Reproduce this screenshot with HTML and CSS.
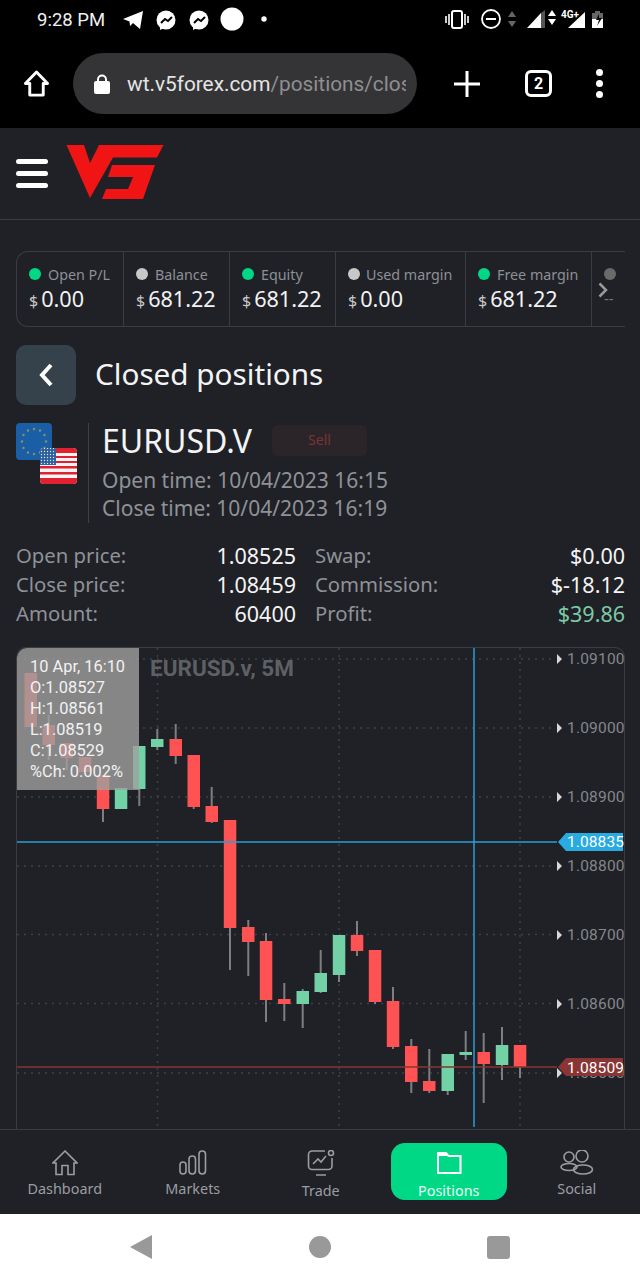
FILE: index.html
```html
<!doctype html>
<html lang="en">
<head>
    <meta charset="UTF-8">
    <title>Closed positions</title>
    <link rel="stylesheet" href="styles.css">
</head>
<body>

<div class="status-bar">
    <span class="status-time">9:28 PM</span>
    <svg class="status-left" viewBox="115 5 160 32">
        <path d="M123 20L143 12L140 30L133 24L130 27L129.500 22.500Z" fill="#fff"/>
        <circle cx="166" cy="21" r="9.500" fill="#fff"/><path d="M160 31l0-5 4 3z" fill="#fff"/>
        <path d="M161 24l4-4 3 2 4-4" class="zigzag"/>
        <circle cx="199" cy="21" r="9.500" fill="#fff"/><path d="M193 31l0-5 4 3z" fill="#fff"/>
        <path d="M194 24l4-4 3 2 4-4" class="zigzag"/>
        <circle cx="232" cy="20" r="11.500" fill="#fff"/>
        <circle cx="264" cy="20" r="2.700" fill="#fff"/>
    </svg>
    <svg class="status-right" viewBox="440 5 170 32">
        <rect x="452" y="12" width="10" height="17" rx="2" fill="none" stroke="#fff" stroke-width="2"/>
        <path d="M449 15v11M446 17v7M465 15v11M468 17v7" stroke="#fff" stroke-width="1.600"/>
        <circle cx="491" cy="20" r="9" fill="none" stroke="#fff" stroke-width="1.800"/>
        <path d="M486 20h10" stroke="#fff" stroke-width="2"/>
        <path d="M512 12l4 6h-8zM512 28l4-6h-8z" fill="#666"/>
        <path d="M527 29L541 14V29Z" fill="#fff"/><path d="M541 14l4-3V29h-4z" fill="#555"/>
        <path d="M552 11l4 6h-8zM552 26l4-6h-8z" fill="#fff"/>
        <text x="561" y="19" class="status-net">4G+</text>
        <path d="M568 29L585 13V29Z" fill="#fff"/>
        <path d="M595 12h5v2h3v6h-11v-6h3z" fill="#666"/>
        <path d="M592 20h11v9h-11z" fill="#fff"/>
        <path d="M599 15l-3 6h3l-2 6 5-8h-3z" fill="#000"/>
    </svg>
</div>

<div class="browser-bar">
    <svg class="browser-home" viewBox="0 0 28 28"><path d="M14 2L2.500 14H7V26H21V14H25.500Z" fill="none" stroke="#fff" stroke-width="3" stroke-linejoin="round"/></svg>
    <div class="url-pill">
        <svg class="url-lock" viewBox="0 0 16 20"><path d="M4 8V5.500a4 4 0 0 1 8 0V8" fill="none" stroke="#fff" stroke-width="2"/><rect y="7" width="16" height="13" rx="2" fill="#fff"/></svg>
        <div class="url-text">wt.v5forex.com<span class="url-path">/positions/closed</span></div>
    </div>
    <svg class="browser-plus" viewBox="0 0 26 26"><path d="M13 0V26M0 13H26" stroke="#fff" stroke-width="3"/></svg>
    <div class="tab-count">2</div>
    <div class="browser-menu"><i></i><i></i><i></i></div>
</div>

<div class="app-header">
    <div class="burger"><i></i><i></i><i></i></div>
    <svg class="logo" viewBox="66 145 98 54">
        <path d="M66.500 145H84L90 163L99 145H163.500L157 157.500H113L90 198Z" fill="#f01414"/>
        <path d="M112 165H155L143 199H102L106 189H128L133 177H108Z" fill="#f01414"/>
    </svg>
</div>

<div class="stats">
    <div class="stat">
        <div class="stat-label"><i class="dot dot-green"></i>Open P/L</div>
        <div class="stat-value"><small>$</small>0.00</div>
    </div>
    <div class="stat">
        <div class="stat-label"><i class="dot dot-grey"></i>Balance</div>
        <div class="stat-value"><small>$</small>681.22</div>
    </div>
    <div class="stat">
        <div class="stat-label"><i class="dot dot-green"></i>Equity</div>
        <div class="stat-value"><small>$</small>681.22</div>
    </div>
    <div class="stat">
        <div class="stat-label"><i class="dot dot-grey dot-tight"></i>Used margin</div>
        <div class="stat-value"><small>$</small>0.00</div>
    </div>
    <div class="stat">
        <div class="stat-label"><i class="dot dot-green"></i>Free margin</div>
        <div class="stat-value"><small>$</small>681.22</div>
    </div>
    <div class="stat stat-cut">
        <div class="stat-label"><i class="dot dot-dim"></i></div>
        <div class="stat-value stat-empty">--</div>
    </div>
    <svg class="stats-next" viewBox="0 0 10 16"><path d="M1.500 1.500L8 8L1.500 14.500" fill="none" stroke="#9a9a9a" stroke-width="2.500"/></svg>
</div>

<div class="page-title">
    <div class="back-btn">
        <svg viewBox="0 0 14 24"><path d="M12 2L3 12L12 22" fill="none" stroke="#fff" stroke-width="4"/></svg>
    </div>
    <h1>Closed positions</h1>
</div>

<div class="pair">
    <div class="pair-flags">
        <svg viewBox="0 0 61 61">
            <defs>
                <pattern id="stars" width="3" height="3" patternUnits="userSpaceOnUse">
                    <circle cx="1.500" cy="1.500" r="0.700" fill="#dfe8f2"/>
                </pattern>
            </defs>
            <rect width="36" height="37" rx="4" fill="#1a5fa6"/>
            <g fill="#8a8f6a">
                <circle cx="18" cy="6" r="1.200"/><circle cx="24" cy="7.500" r="1.200"/><circle cx="28.500" cy="12" r="1.200"/>
                <circle cx="30" cy="18.500" r="1.200"/><circle cx="28.500" cy="25" r="1.200"/><circle cx="24" cy="29.500" r="1.200"/>
                <circle cx="18" cy="31" r="1.200"/><circle cx="12" cy="29.500" r="1.200"/><circle cx="7.500" cy="25" r="1.200"/>
                <circle cx="6" cy="18.500" r="1.200"/><circle cx="7.500" cy="12" r="1.200"/><circle cx="12" cy="7.500" r="1.200"/>
            </g>
            <rect x="24" y="25" width="37" height="36" rx="4" fill="#f4f4f4"/>
            <path d="M28 25h29a4 4 0 0 1 4 4v1H24v-1a4 4 0 0 1 4-4zM40 33h21v2H40zM40 38h21v2H40zM24 43h37v2.500H24zM24 49h37v2.500H24zM24 55h37v2a4 4 0 0 1-4 4H28a4 4 0 0 1-4-4z" fill="#e0212f"/>
            <path d="M28 25h12v17H24V29a4 4 0 0 1 4-4z" fill="#2b5f9e"/>
            <path d="M28 25h12v17H24V29a4 4 0 0 1 4-4z" fill="url(#stars)"/>
        </svg>
    </div>
    <div class="pair-info">
        <div class="pair-top">
            <span class="pair-name">EURUSD.V</span>
            <span class="side-badge">Sell</span>
        </div>
        <div class="pair-time">Open time: 10/04/2023 16:15</div>
        <div class="pair-time">Close time: 10/04/2023 16:19</div>
    </div>
</div>

<div class="details">
    <div class="detail-col detail-col-left">
        <div class="row"><span>Open price:</span><b>1.08525</b></div>
        <div class="row"><span>Close price:</span><b>1.08459</b></div>
        <div class="row"><span>Amount:</span><b>60400</b></div>
    </div>
    <div class="detail-col detail-col-right">
        <div class="row"><span>Swap:</span><b>$0.00</b></div>
        <div class="row"><span>Commission:</span><b>$-18.12</b></div>
        <div class="row"><span>Profit:</span><b class="profit">$39.86</b></div>
    </div>
</div>

<div class="chart">
    <svg class="chart-svg" viewBox="16 647 608 483" width="608" height="483">
        <!-- grid -->
        <path class="grid" d="M17 659H556M17 728H556M17 797H556M17 866H556M17 934.500H556M17 1003.500H556M17 1073H556M157.500 648V1128M339 648V1128M520 648V1128"/>
        <text x="150" y="676" class="chart-name">EURUSD.v, 5M</text>
        <!-- candles -->
        <path class="wick" d="M48.700 715V760M66.700 743V770M103 775V822M139.300 746V806M157.300 729V750M175.700 724V764M193.700 755V809M211.700 787V823M230 820V970M248.300 920V976M266 933V1022M284.300 983V1021M302.700 989V1028M320.700 950V993M339 935V982M357 921V956M375 950V1004M393 987V1049M411.300 1039V1093M429.300 1049V1093M447.700 1054V1095M465.700 1031V1060M483.700 1033V1103M502 1027V1080M520 1045V1078"/>
        <path class="down" d="M24.500 673h12.500v54h-12.500zM42.500 725h12.500v20h-12.500zM60.500 743h12.500v15h-12.500zM78.800 757h12.500v15h-12.500zM96.800 775h12.500v34h-12.500zM169.500 739h12.500v17h-12.500zM187.500 755h12.500v52h-12.500zM205.500 806h12.500v16h-12.500zM223.800 820h12.500v108h-12.500zM242 927h12.500v15h-12.500zM259.800 941h12.500v59h-12.500zM278 999h12.500v5h-12.500zM350.800 935h12.500v16h-12.500zM368.800 950h12.500v52h-12.500zM386.800 1001h12.500v46h-12.500zM405 1046h12.500v36h-12.500zM423 1081h12.500v10h-12.500zM477.500 1052h12.500v12h-12.500zM513.800 1045h12.500v22h-12.500z"/>
        <path class="up" d="M114.800 788h12.500v21h-12.500zM133 746h12.500v43h-12.500zM151 739h12.500v8h-12.500zM296.500 991h12.500v13h-12.500zM314.500 973h12.500v19h-12.500zM332.800 935h12.500v40h-12.500zM441.500 1054h12.500v37h-12.500zM459.500 1052h12.500v3h-12.500zM495.800 1045h12.500v20h-12.500z"/>
        <!-- axis -->
        <path class="axis-mark" d="M557 654l5 5-5 5zM557 723l5 5-5 5zM557 792l5 5-5 5zM557 861l5 5-5 5zM557 930l5 5-5 5zM557 999l5 5-5 5zM557 1068l5 5-5 5z"/>
        <g class="axis-text">
            <text x="567" y="664">1.09100</text>
            <text x="567" y="733">1.09000</text>
            <text x="567" y="802">1.08900</text>
            <text x="567" y="871">1.08800</text>
            <text x="567" y="940">1.08700</text>
            <text x="567" y="1009">1.08600</text>
            <text x="567" y="1078">1.08500</text>
        </g>
        <!-- current lines -->
        <path class="line-red" d="M17 1067H557"/>
        <path class="tag-red" d="M558 1067L566 1058H623V1076H566Z"/>
        <text x="567" y="1072.500" class="tag-text">1.08509</text>
        <path class="line-blue" d="M17 842H557M474 648V1127"/>
        <path class="tag-blue" d="M558 842L566 833H623V851H566Z"/>
        <text x="567" y="847" class="tag-text">1.08835</text>
    </svg>
    <div class="chart-tip">
        <div>10 Apr, 16:10</div>
        <div>O:1.08527</div>
        <div>H:1.08561</div>
        <div>L:1.08519</div>
        <div>C:1.08529</div>
        <div>%Ch: 0.002%</div>
    </div>
</div>

<div class="bottom-nav">
    <a href="#" class="nav-item">
        <svg viewBox="0 0 26 26"><path d="M13 1L1 13H4V24.500H10V15.500H16V24.500H22V13H25Z" class="nav-ico"/></svg>
        <span>Dashboard</span>
    </a>
    <a href="#" class="nav-item">
        <svg viewBox="0 0 28 26"><rect x="1" y="12" width="6" height="12" rx="3" class="nav-ico"/><rect x="10" y="6" width="6.500" height="18" rx="3.200" class="nav-ico"/><rect x="20" y="1" width="6.500" height="23" rx="3.200" class="nav-ico"/></svg>
        <span>Markets</span>
    </a>
    <a href="#" class="nav-item nav-low">
        <svg viewBox="0 0 28 26"><path d="M18 1H5a3.500 3.500 0 0 0-3.500 3.500V16A3.500 3.500 0 0 0 5 19.500H21.500A3.500 3.500 0 0 0 25 16V8" class="nav-ico"/><circle cx="24" cy="3" r="2.500" class="nav-ico"/><path d="M6 14l5-5 3 3 5-6M9 25H19" class="nav-ico"/></svg>
        <span>Trade</span>
    </a>
    <a href="#" class="nav-item nav-low nav-active">
        <svg viewBox="0 0 26 26"><path d="M2 3H10L12.500 6H24.500V23H2Z" class="nav-ico"/><path d="M2 3H10L12.500 6H2Z" fill="#fff"/></svg>
        <span>Positions</span>
    </a>
    <a href="#" class="nav-item">
        <svg viewBox="0 0 34 26"><circle cx="9" cy="7" r="5" class="nav-ico"/><circle cx="22" cy="6" r="6" class="nav-ico"/><ellipse cx="9" cy="17" rx="8" ry="3.500" class="nav-ico"/><ellipse cx="23" cy="19.500" rx="9.500" ry="4.500" class="nav-ico"/></svg>
        <span>Social</span>
    </a>
</div>

<div class="android-nav">
    <svg class="android-back" viewBox="0 0 22 24"><path d="M22 0V24L0 12Z" fill="#999"/></svg>
    <i class="android-home"></i>
    <i class="android-square"></i>
</div>

</body>
</html>
```

FILE: styles.css
```css
* {
    margin: 0;
    padding: 0;
    box-sizing: border-box;
}
html, body {
    width: 640px;
    height: 1280px;
    overflow: hidden;
}
body {
    background: #1f2127;
    color: #fff;
    font-family: "Noto Sans", "Liberation Sans", sans-serif;
}
a {
    color: inherit;
    text-decoration: none;
}
i {
    display: block;
}

/* status bar */
.status-bar {
    display: flex;
    align-items: center;
    height: 40px;
    background: #000;
    padding-left: 37px;
}
.status-time {
    width: 78px;
    font: 18.500px "Roboto", sans-serif;
    color: #f0f0f0;
}
.status-left {
    width: 160px;
    height: 32px;
}
.status-right {
    width: 170px;
    height: 32px;
    margin-left: 165px;
}
.zigzag {
    fill: none;
    stroke: #000;
    stroke-width: 2;
}
.status-net {
    font: bold 10px "Roboto", sans-serif;
    fill: #fff;
}

/* browser toolbar */
.browser-bar {
    display: flex;
    align-items: center;
    height: 88px;
    background: #000;
    padding: 0 0 1px 23px;
}
.browser-home {
    width: 27px;
    height: 27px;
}
.url-pill {
    display: flex;
    align-items: center;
    width: 344px;
    height: 61px;
    margin-left: 23px;
    padding-left: 21px;
    border-radius: 31px;
    background: #343437;
}
.url-lock {
    width: 16px;
    height: 20px;
}
.url-text {
    width: 279px;
    margin-left: 17px;
    overflow: hidden;
    white-space: nowrap;
    font: 20.800px "Roboto", sans-serif;
    color: #e4e4e4;
}
.url-path {
    color: #8f8f8f;
}
.browser-plus {
    width: 26px;
    height: 26px;
    margin-left: 37px;
}
.tab-count {
    width: 27px;
    height: 27px;
    margin-left: 45px;
    border: 3px solid #fff;
    border-radius: 6px;
    font: bold 16px/21px "Roboto", sans-serif;
    text-align: center;
}
.browser-menu {
    display: flex;
    flex-direction: column;
    gap: 4px;
    margin-left: 44px;
}
.browser-menu i {
    width: 7px;
    height: 7px;
    border-radius: 50%;
    background: #fff;
}

/* app header */
.app-header {
    display: flex;
    align-items: flex-start;
    height: 92px;
    padding: 17px 0 0 16px;
    border-bottom: 1px solid #3a3c41;
}
.burger {
    display: flex;
    flex-direction: column;
    gap: 7px;
    margin-top: 14px;
}
.burger i {
    width: 32px;
    height: 5px;
    border-radius: 3px;
    background: #fff;
}
.logo {
    width: 98px;
    height: 54px;
    margin-left: 18px;
}

/* stats strip */
.stats {
    position: relative;
    display: grid;
    grid-template-columns: 107px 106px 106px 130px 126px 1fr;
    height: 76px;
    margin: 31px 15px 0 16px;
    border: 1px solid #3a3c41;
    border-right: 0;
    border-radius: 12px 0 0 12px;
    overflow: hidden;
}
.stat {
    padding: 12px 0 0 12px;
    border-right: 1px solid #3a3c41;
    white-space: nowrap;
}
.stat-cut {
    border-right: 0;
    padding-left: 12px;
}
.stat-label {
    display: flex;
    align-items: center;
    height: 20px;
    font-size: 14.300px;
    color: #8d9094;
}
.dot {
    width: 12px;
    height: 12px;
    margin-right: 7px;
    border-radius: 50%;
}
.dot-tight {
    margin-right: 6px;
}
.dot-green {
    background: #00d885;
}
.dot-grey {
    background: #c8c8c8;
}
.dot-dim {
    background: #6a6a6a;
}
.stat-value {
    font-size: 21.600px;
    line-height: 29px;
    color: #f2f2f2;
}
.stat-value small {
    margin-right: 3px;
    font-size: 16px;
    color: #c8c8c8;
}
.stat-empty {
    color: #777;
    font-size: 15px;
}
.stats-next {
    position: absolute;
    right: 17px;
    top: 30px;
    width: 10px;
    height: 16px;
}

/* title */
.page-title {
    display: flex;
    align-items: center;
    gap: 19px;
    height: 60px;
    margin: 18px 16px 0;
}
.back-btn {
    display: flex;
    align-items: center;
    justify-content: center;
    width: 60px;
    height: 60px;
    border-radius: 10px;
    background: #36424b;
}
.back-btn svg {
    width: 14px;
    height: 24px;
}
.page-title h1 {
    padding-bottom: 3px;
    font-size: 29.700px;
    font-weight: 400;
    color: #f4f4f4;
}

/* pair block */
.pair {
    display: flex;
    height: 100px;
    margin: 18px 16px 0;
}
.pair-flags {
    width: 73px;
    height: 100px;
    border-right: 1px solid #3e4045;
}
.pair-flags svg {
    display: block;
    width: 61px;
    height: 61px;
}
.pair-info {
    padding-left: 13px;
}
.pair-top {
    display: flex;
    align-items: center;
    height: 34px;
}
.pair-name {
    font-size: 32px;
    color: #f4f4f4;
}
.side-badge {
    width: 95px;
    height: 31px;
    margin-left: 20px;
    border-radius: 6px;
    background: #2b2529;
    font-size: 14px;
    line-height: 29px;
    text-align: center;
    color: #7a3436;
}
.pair-time {
    font-size: 21px;
    line-height: 28px;
    color: #8f9296;
}
.pair-top + .pair-time {
    margin-top: 9px;
}

/* details */
.details {
    display: flex;
    height: 87px;
    margin: 18px 15px 0 16px;
}
.detail-col-left {
    width: 280px;
}
.detail-col-right {
    width: 310px;
    margin-left: 19px;
}
.row {
    display: flex;
    justify-content: space-between;
    font-size: 20.300px;
    line-height: 29px;
    color: #8f9296;
}
.row b {
    font-size: 21.500px;
    font-weight: 400;
    color: #f4f4f4;
}
.row .profit {
    color: #7cc9a6;
}

/* chart */
.chart {
    position: relative;
    width: 609px;
    height: 482px;
    margin: 19px 0 0 16px;
    border: 1px solid #3a3c41;
    border-bottom: 0;
    border-radius: 10px 10px 0 0;
}
.chart-svg {
    position: absolute;
    left: -1px;
    top: -1px;
    overflow: visible;
}
.grid {
    fill: none;
    stroke: #3f4146;
    stroke-width: 1.500;
    stroke-dasharray: 2 5;
}
.chart-name {
    font: bold 22.500px "Roboto", sans-serif;
    fill: #5e6063;
}
.wick {
    fill: none;
    stroke: #7c7e80;
    stroke-width: 2;
}
.down {
    fill: #ff5252;
}
.up {
    fill: #72d1a5;
}
.axis-mark {
    fill: #d8d8d8;
}
.axis-text text {
    font: 15.500px "Roboto", sans-serif;
    letter-spacing: 0.200px;
    fill: #85878a;
}
.line-red {
    fill: none;
    stroke: #8a3535;
    stroke-width: 1.500;
}
.tag-red {
    fill: #8a3535;
}
.line-blue {
    fill: none;
    stroke: #2a9fd6;
    stroke-width: 1.500;
}
.tag-blue {
    fill: #29abe2;
}
.tag-text {
    font: 15.500px "Roboto", sans-serif;
    letter-spacing: 0.100px;
    fill: #fff;
}
.chart-tip {
    position: absolute;
    left: 0;
    top: 0;
    width: 122px;
    height: 142px;
    padding: 8px 0 0 13px;
    border-radius: 10px 0 0 0;
    background: rgba(160, 160, 160, 0.8);
    font: 16.400px/21px "Roboto", sans-serif;
    color: #f2f2f2;
}

/* bottom nav */
.bottom-nav {
    position: relative;
    display: grid;
    grid-template-columns: repeat(5, 128px);
    height: 85px;
    padding-top: 13px;
    background: #1f2127;
    border-top: 1px solid #3a3c41;
}
.nav-item {
    display: flex;
    flex-direction: column;
    align-items: center;
    height: 57px;
    margin: 0 5.500px 0 7px;
    padding-top: 7px;
    border-radius: 14px;
    font-size: 14.400px;
    line-height: 18px;
    color: #9b9da0;
}
.nav-item svg {
    display: block;
    height: 26px;
    margin-bottom: 4px;
}
.nav-low svg {
    margin-bottom: 6px;
}
.nav-ico {
    fill: none;
    stroke: #9b9da0;
    stroke-width: 1.600;
}
.nav-active {
    background: #00d885;
    color: #eafff5;
}
.nav-active .nav-ico {
    stroke: #fff;
    stroke-width: 2;
}

/* android nav */
.android-nav {
    position: relative;
    height: 66px;
    background: #fff;
}
.android-back {
    position: absolute;
    left: 130px;
    top: 21px;
    width: 22px;
    height: 24px;
}
.android-home {
    position: absolute;
    left: 309px;
    top: 22px;
    width: 22px;
    height: 22px;
    border-radius: 50%;
    background: #999;
}
.android-square {
    position: absolute;
    left: 487px;
    top: 22px;
    width: 23px;
    height: 23px;
    border-radius: 3px;
    background: #999;
}
```
